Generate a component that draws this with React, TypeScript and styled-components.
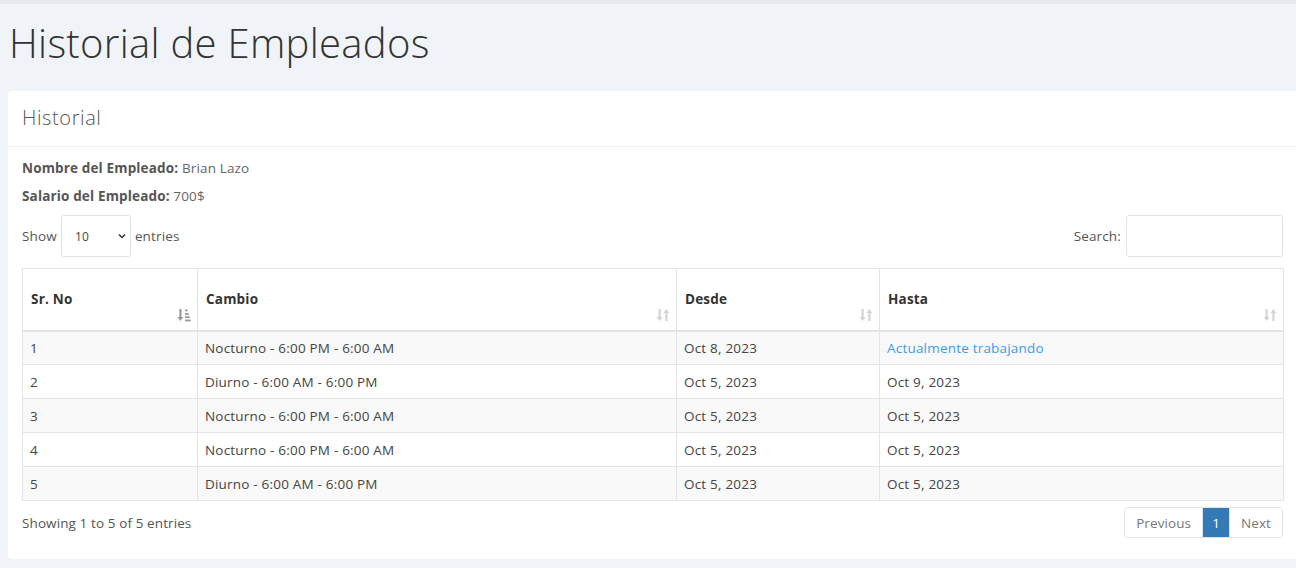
import React from "react";
import styled, { createGlobalStyle } from "styled-components";

const FONT = `"Open Sans", "Liberation Sans", Arial, sans-serif`;

const GlobalStyle = createGlobalStyle`
  html, body { margin: 0; padding: 0; }
  body {
    background: #f0f3f7;
    font-family: ${FONT};
    color: #555;
    overflow: hidden;
  }
  * { box-sizing: border-box; }
`;

const Page = styled.div`
  width: 1296px;
  height: 568px;
  display: flex;
  flex-direction: column;
`;

const TopStrip = styled.div`
  height: 4px;
  background: #e6e9ee;
  flex: none;
`;

const Content = styled.div`
  padding: 0 0 0 8px;
  display: flex;
  flex-direction: column;
`;

const Title = styled.h1`
  margin: 0;
  height: 87px;
  display: flex;
  align-items: center;
  padding: 0 0 10px 1px;
  font-size: 40px;
  font-weight: 300;
  color: #333;
  letter-spacing: 0.3px;
`;

const Card = styled.section`
  background: #fff;
  border-radius: 4px 0 0 4px;
  width: 1289px;
  height: 468px;
  display: flex;
  flex-direction: column;
`;

const CardHeader = styled.div`
  height: 56px;
  flex: none;
  border-bottom: 1px solid #eef0f3;
  display: flex;
  align-items: center;
  padding: 0 14px 3px 14px;
  font-size: 20px;
  font-weight: 300;
  color: #555;
  letter-spacing: 0.6px;
`;

const CardBody = styled.div`
  padding: 11px 14px 21px 14px;
  display: flex;
  flex-direction: column;
`;

const InfoLine = styled.p`
  margin: 0 0 8px 0;
  line-height: 20px;
  font-size: 13.5px;
  letter-spacing: 0.15px;
  color: #666;
  b {
    font-weight: 700;
    color: #555;
  }
`;

const Controls = styled.div`
  margin-top: 1px;
  height: 42px;
  display: flex;
  align-items: center;
  justify-content: space-between;
  font-size: 13.5px;
  letter-spacing: 0.15px;
  color: #555;
`;

const ControlGroup = styled.label`
  display: flex;
  align-items: center;
  gap: 4px;
`;

const SelectBox = styled.div`
  width: 70px;
  height: 42px;
  border: 1px solid #e3e3e3;
  border-radius: 3px;
  display: flex;
  align-items: center;
  justify-content: space-between;
  padding: 0 3px 0 13px;
  font-size: 12px;
  color: #444;
`;

const SearchInput = styled.div`
  width: 157px;
  height: 42px;
  border: 1px solid #e3e3e3;
  border-radius: 3px;
  margin-left: 1px;
`;

const Table = styled.table`
  margin-top: 11px;
  width: 1261px;
  border-collapse: collapse;
  table-layout: fixed;
  font-size: 13.5px;
  letter-spacing: 0.2px;
  color: #444;
`;

const HeadCell = styled.th<{ $w: number }>`
  width: ${(p) => p.$w}px;
  height: 62px;
  border: 1px solid #e5e5e5;
  border-bottom: 2px solid #e5e5e5;
  padding: 0 8px;
  text-align: left;
  font-weight: 700;
  color: #333;
  position: relative;
`;

const SortIcon = styled.span`
  position: absolute;
  right: 6px;
  bottom: 8px;
  width: 14px;
  height: 14px;
  display: flex;
`;

const Row = styled.tr<{ $odd: boolean }>`
  background: ${(p) => (p.$odd ? "#f9f9f9" : "#fff")};
`;

const Cell = styled.td`
  height: 34px;
  border: 1px solid #e5e5e5;
  padding: 0 7px;
`;

const Link = styled.a`
  color: #3c9cf0;
  text-decoration: none;
`;

const Footer = styled.div`
  margin-top: 6px;
  height: 31px;
  width: 1261px;
  display: flex;
  align-items: center;
  justify-content: space-between;
  font-size: 13.5px;
  letter-spacing: 0.1px;
  color: #555;
`;

const Pager = styled.div`
  display: flex;
  height: 31px;
  border: 1px solid #e2e2e2;
  border-radius: 4px;
  overflow: hidden;
`;

const PageBtn = styled.span<{ $active?: boolean }>`
  display: flex;
  align-items: center;
  padding: 0 ${(p) => (p.$active ? "9px" : "11px")};
  background: ${(p) => (p.$active ? "#337ab7" : "#fff")};
  color: ${(p) => (p.$active ? "#fff" : "#777")};
  font-size: 13.5px;
  letter-spacing: 0.1px;
  & + & {
    border-left: 1px solid #e2e2e2;
  }
`;

const SortBoth = () => (
  <svg width="14" height="14" viewBox="0 0 14 14">
    <g fill="#d4d4d4">
      <rect x="2.5" y="1" width="2.2" height="9" />
      <polygon points="0.6,9 6.6,9 3.6,13" />
      <rect x="9.3" y="4" width="2.2" height="9" />
      <polygon points="7.4,5 13.4,5 10.4,1" />
    </g>
  </svg>
);

const SortAsc = () => (
  <svg width="14" height="14" viewBox="0 0 14 14">
    <g fill="#9a9a9a">
      <rect x="2.3" y="1" width="2.2" height="9" />
      <polygon points="0.4,9 6.4,9 3.4,13" />
      <rect x="8" y="1.5" width="2.5" height="1.8" />
      <rect x="8" y="5" width="3.7" height="1.8" />
      <rect x="8" y="8.3" width="4.8" height="1.8" />
      <rect x="8" y="11.6" width="5.8" height="1.8" />
    </g>
  </svg>
);

const Chevron = () => (
  <svg width="10" height="10" viewBox="0 0 10 10">
    <path d="M2 3.5 L5 6.5 L8 3.5" stroke="#333" strokeWidth="1.5" fill="none" />
  </svg>
);

const rows = [
  ["1", "Nocturno - 6:00 PM - 6:00 AM", "Oct 8, 2023", null],
  ["2", "Diurno - 6:00 AM - 6:00 PM", "Oct 5, 2023", "Oct 9, 2023"],
  ["3", "Nocturno - 6:00 PM - 6:00 AM", "Oct 5, 2023", "Oct 5, 2023"],
  ["4", "Nocturno - 6:00 PM - 6:00 AM", "Oct 5, 2023", "Oct 5, 2023"],
  ["5", "Diurno - 6:00 AM - 6:00 PM", "Oct 5, 2023", "Oct 5, 2023"],
];

const columns: { label: string; w: number; asc?: boolean }[] = [
  { label: "Sr. No", w: 175, asc: true },
  { label: "Cambio", w: 479 },
  { label: "Desde", w: 203 },
  { label: "Hasta", w: 404 },
];

export default function App() {
  return (
    <>
      <GlobalStyle />
      <Page>
        <TopStrip />
        <Content>
          <Title>Historial de Empleados</Title>
          <Card>
            <CardHeader>Historial</CardHeader>
            <CardBody>
              <InfoLine>
                <b>Nombre del Empleado:</b> Brian Lazo
              </InfoLine>
              <InfoLine>
                <b>Salario del Empleado:</b> 700$
              </InfoLine>
              <Controls>
                <ControlGroup>
                  Show
                  <SelectBox>
                    10
                    <Chevron />
                  </SelectBox>
                  entries
                </ControlGroup>
                <ControlGroup>
                  Search:
                  <SearchInput />
                </ControlGroup>
              </Controls>
              <Table>
                <thead>
                  <tr>
                    {columns.map((c) => (
                      <HeadCell key={c.label} $w={c.w}>
                        {c.label}
                        <SortIcon>{c.asc ? <SortAsc /> : <SortBoth />}</SortIcon>
                      </HeadCell>
                    ))}
                  </tr>
                </thead>
                <tbody>
                  {rows.map((r, i) => (
                    <Row key={r[0]} $odd={i % 2 === 0}>
                      <Cell>{r[0]}</Cell>
                      <Cell>{r[1]}</Cell>
                      <Cell>{r[2]}</Cell>
                      <Cell>{r[3] ?? <Link href="#">Actualmente trabajando</Link>}</Cell>
                    </Row>
                  ))}
                </tbody>
              </Table>
              <Footer>
                <span>Showing 1 to 5 of 5 entries</span>
                <Pager>
                  <PageBtn>Previous</PageBtn>
                  <PageBtn $active>1</PageBtn>
                  <PageBtn>Next</PageBtn>
                </Pager>
              </Footer>
            </CardBody>
          </Card>
        </Content>
      </Page>
    </>
  );
}
